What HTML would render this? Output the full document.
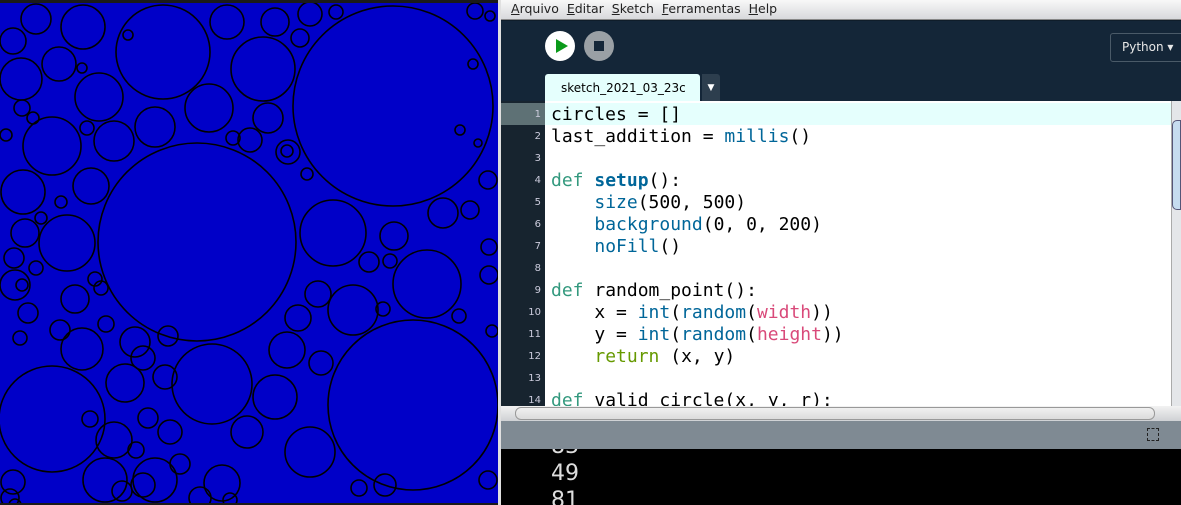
<!DOCTYPE html>
<html><head><meta charset="utf-8"><style>
*{margin:0;padding:0;box-sizing:border-box}
body{width:1181px;height:505px;overflow:hidden;background:#0f1d2a;position:relative;font-family:"DejaVu Sans","Liberation Sans",sans-serif}
.a{position:absolute}
.code{font-family:"DejaVu Sans Mono","Liberation Mono",monospace;font-size:18px;white-space:pre;color:#000}
.ln{font-family:"DejaVu Sans",sans-serif;font-size:10px;color:#ccd;text-align:right;width:40px}
.k{color:#33997e}.f{color:#006699}.b{color:#006699;font-weight:bold}.p{color:#d94a7a}.r{color:#669900}
</style></head><body>
<div class="a" style="left:0;top:0;width:500px;height:505px;background:#1a1a1a"></div>
<svg class="a" style="left:0;top:3px" width="498" height="500" viewBox="0 3 498 500">
<rect x="0" y="3" width="498" height="500" fill="#0000c8"/>
<g fill="none" stroke="#000" stroke-width="1.6">
<circle cx="393" cy="106" r="100"/><circle cx="197" cy="242" r="99"/><circle cx="413" cy="405" r="85"/>
<circle cx="52" cy="419" r="53"/><circle cx="163" cy="52" r="47"/><circle cx="263" cy="69" r="32"/>
<circle cx="212" cy="384" r="40"/><circle cx="333" cy="233" r="33"/><circle cx="427" cy="284" r="34"/>
<circle cx="52" cy="146" r="29"/><circle cx="67" cy="243" r="28"/><circle cx="99" cy="97" r="24"/>
<circle cx="353" cy="310" r="25"/><circle cx="275" cy="397" r="22"/><circle cx="310" cy="452" r="25"/>
<circle cx="155" cy="480" r="22"/><circle cx="222" cy="483" r="18"/><circle cx="209" cy="108" r="24"/>
<circle cx="155" cy="127" r="20"/><circle cx="83" cy="27" r="22"/><circle cx="23" cy="192" r="22"/>
<circle cx="21" cy="79" r="21"/><circle cx="59" cy="64" r="17"/><circle cx="114" cy="141" r="20"/>
<circle cx="91" cy="186" r="18"/><circle cx="82" cy="349" r="21"/><circle cx="125" cy="383" r="19"/>
<circle cx="247" cy="432" r="16"/><circle cx="287" cy="350" r="18"/><circle cx="394" cy="236" r="14"/>
<circle cx="443" cy="213" r="15"/><circle cx="36" cy="19" r="15"/><circle cx="227" cy="22" r="17"/>
<circle cx="275" cy="22" r="14"/><circle cx="268" cy="118" r="15"/><circle cx="13" cy="41" r="13"/>
<circle cx="25" cy="233" r="14"/><circle cx="75" cy="299" r="14"/><circle cx="135" cy="342" r="15"/>
<circle cx="321" cy="363" r="12"/><circle cx="105" cy="480" r="22"/><circle cx="165" cy="377" r="12"/>
<circle cx="15" cy="285" r="15"/><circle cx="14" cy="258" r="10"/><circle cx="28" cy="313" r="10"/>
<circle cx="36" cy="268" r="7"/><circle cx="60" cy="330" r="10"/><circle cx="114" cy="440" r="18"/>
<circle cx="170" cy="432" r="12"/><circle cx="143" cy="485" r="12"/><circle cx="122" cy="491" r="10"/>
<circle cx="200" cy="498" r="11"/><circle cx="143" cy="358" r="12"/><circle cx="168" cy="336" r="10"/>
<circle cx="288" cy="152" r="12"/><circle cx="250" cy="140" r="12"/><circle cx="310" cy="14" r="12"/>
<circle cx="300" cy="38" r="9"/><circle cx="336" cy="12" r="7"/><circle cx="488" cy="180" r="9"/>
<circle cx="470" cy="210" r="9"/><circle cx="489" cy="247" r="8"/><circle cx="489" cy="275" r="9"/>
<circle cx="369" cy="262" r="10"/><circle cx="390" cy="261" r="7"/><circle cx="318" cy="294" r="13"/>
<circle cx="383" cy="309" r="7"/><circle cx="459" cy="316" r="7"/><circle cx="298" cy="318" r="13"/>
<circle cx="385" cy="485" r="11"/><circle cx="359" cy="488" r="8"/><circle cx="488" cy="480" r="9"/>
<circle cx="475" cy="11" r="8"/><circle cx="490" cy="16" r="5"/><circle cx="13" cy="482" r="12"/>
<circle cx="10" cy="498" r="9"/><circle cx="90" cy="419" r="8"/><circle cx="20" cy="338" r="7"/>
<circle cx="22" cy="285" r="6"/><circle cx="15" cy="505" r="6"/><circle cx="230" cy="500" r="7"/>
<circle cx="136" cy="450" r="8"/><circle cx="148" cy="418" r="10"/><circle cx="180" cy="464" r="10"/>
<circle cx="22" cy="108" r="8"/><circle cx="33" cy="118" r="6"/><circle cx="6" cy="135" r="6"/>
<circle cx="87" cy="128" r="7"/><circle cx="82" cy="68" r="5"/><circle cx="128" cy="35" r="5"/>
<circle cx="233" cy="138" r="7"/><circle cx="287" cy="151" r="6"/><circle cx="307" cy="174" r="6"/>
<circle cx="95" cy="279" r="7"/><circle cx="61" cy="202" r="6"/><circle cx="41" cy="218" r="6"/>
<circle cx="106" cy="324" r="8"/><circle cx="101" cy="288" r="7"/><circle cx="473" cy="64" r="5"/>
<circle cx="492" cy="331" r="6"/><circle cx="460" cy="130" r="5"/><circle cx="478" cy="143" r="4"/>
</g></svg>
<div class="a" style="left:498px;top:0;width:3px;height:505px;background:#e0e0e0"></div>
<div class="a" style="left:501px;top:0;width:680px;height:20px;background:linear-gradient(#f8f8f8,#d8d9dc);border-bottom:1px solid #888;font-size:12.5px;color:#222;line-height:18px;padding-left:10px;font-family:'DejaVu Sans',sans-serif">
<u>A</u>rquivo&nbsp;&nbsp;<u>E</u>ditar&nbsp;&nbsp;<u>S</u>ketch&nbsp;&nbsp;<u>F</u>erramentas&nbsp;&nbsp;<u>H</u>elp</div>
<div class="a" style="left:501px;top:21px;width:680px;height:80px;background:#142638"></div>
<div class="a" style="left:545px;top:31px;width:30px;height:30px;border-radius:50%;background:#fff"></div>
<svg class="a" style="left:555px;top:38px" width="14" height="16"><path d="M1 1 L13 8 L1 15Z" fill="#0a9a1a"/></svg>
<div class="a" style="left:584px;top:31px;width:30px;height:30px;border-radius:50%;background:#9aa0a5"></div>
<div class="a" style="left:594px;top:41px;width:10px;height:10px;background:#142638"></div>
<div class="a" style="left:1110px;top:33px;width:75px;height:29px;border:1px solid #4a5a68;border-radius:3px;color:#e8e8e8;font-size:12px;line-height:27px;padding-left:11px">Python ▾</div>
<div class="a" style="left:545px;top:74px;width:155px;height:27px;background:#e5fffd;border-radius:3px 3px 0 0;font-size:12px;line-height:28px;padding-left:16px;color:#000">sketch_2021_03_23c</div>
<div class="a" style="left:702px;top:74px;width:18px;height:27px;background:#2d3e4e;border-radius:0 3px 0 0;color:#fff;font-size:9px;line-height:28px;text-align:center">▼</div>
<div class="a" style="left:501px;top:101px;width:44px;height:305px;background:#17242f"></div>
<div class="a" style="left:501px;top:103px;width:44px;height:22px;background:#5e7175"></div>
<div class="a" style="left:545px;top:101px;width:627px;height:305px;background:#fff;overflow:hidden">
<div class="a" style="left:0;top:2px;width:627px;height:22px;background:#e5fffd"></div>
</div>
<div class="a ln" style="left:501px;top:104px;line-height:22px">1<br>2<br>3<br>4<br>5<br>6<br>7<br>8<br>9<br>10<br>11<br>12<br>13<br>14</div>
<div class="a" style="left:551px;top:101px;width:620px;height:305px;overflow:hidden">
<div class="code" style="line-height:22px;margin-top:3px">circles = []
last_addition = <span class="f">millis</span>()

<span class="k">def</span> <span class="b">setup</span>():
    <span class="f">size</span>(500, 500)
    <span class="f">background</span>(0, 0, 200)
    <span class="f">noFill</span>()

<span class="k">def</span> random_point():
    x = <span class="f">int</span>(<span class="f">random</span>(<span class="p">width</span>))
    y = <span class="f">int</span>(<span class="f">random</span>(<span class="p">height</span>))
    <span class="r">return</span> (x, y)

<span class="k">def</span> valid_circle(x, y, r):</div></div>
<div class="a" style="left:1171px;top:101px;width:10px;height:305px;background:#e4e6e9;border-left:1px solid #aaa"></div>
<div class="a" style="left:1172px;top:120px;width:9px;height:90px;background:#c6dcef;border:1px solid #557;border-radius:5px 0 0 5px"></div>
<div class="a" style="left:501px;top:406px;width:680px;height:15px;background:linear-gradient(#f2f2f2,#cfd1d4)"></div>
<div class="a" style="left:515px;top:407px;width:640px;height:13px;background:linear-gradient(#f0f0f0,#dcdcdc);border:1px solid #999;border-radius:6px"></div>
<div class="a" style="left:501px;top:421px;width:680px;height:28px;background:#7f8a93"></div>
<div class="a" style="left:1147px;top:428px;width:12px;height:13px;border:1px dashed #222"></div>
<div class="a" style="left:501px;top:449px;width:680px;height:56px;background:#000;overflow:hidden">
<div class="a" style="left:50px;top:-16px;color:#ddd;font-family:'DejaVu Sans',sans-serif;font-size:22px;line-height:27px">83<br>49<br>81</div></div>
</body></html>
